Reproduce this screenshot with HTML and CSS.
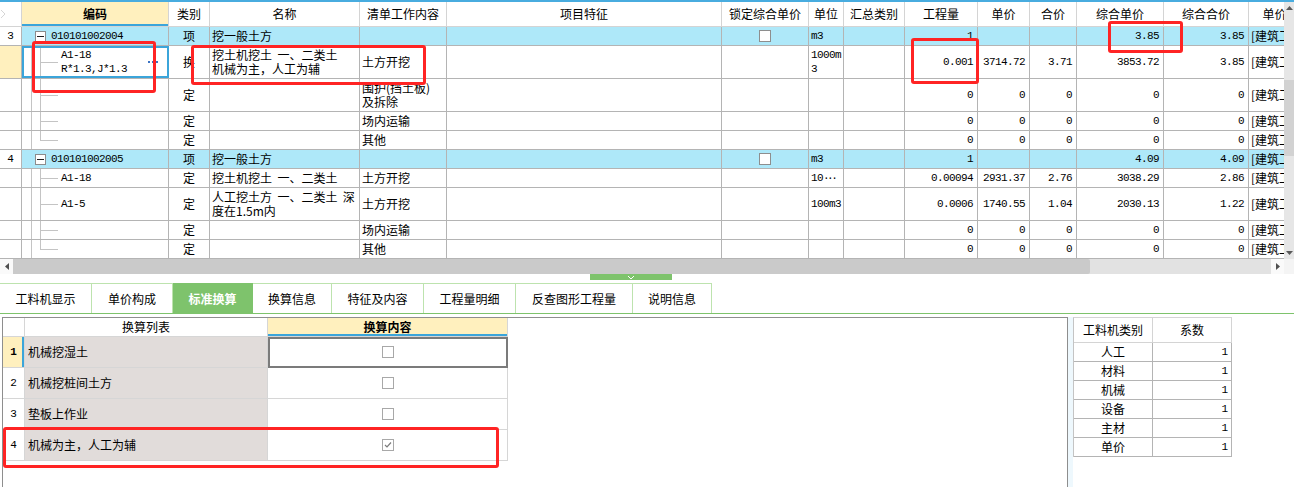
FILE: index.html
```html
<!DOCTYPE html>
<html lang="zh">
<head>
<meta charset="utf-8">
<title>标准换算</title>
<link rel="stylesheet" href="styles.css">
</head>
<body>
<div class="topline"></div>
<div class="gridarea">
  <div class="gridclip">
    <div class="row head">
      <div class="c w0 rnh"><svg width="6" height="10" viewBox="0 0 6 10"><polyline points="1,1 5,5 1,9" fill="none" stroke="#d6d6d6" stroke-width="1"/></svg></div>
      <div class="c w1 hsel">编码</div>
      <div class="c w2">类别</div>
      <div class="c w3">名称</div>
      <div class="c w4">清单工作内容</div>
      <div class="c w5">项目特征</div>
      <div class="c w6">锁定综合单价</div>
      <div class="c w7">单位</div>
      <div class="c w8">汇总类别</div>
      <div class="c w9">工程量</div>
      <div class="c w10">单价</div>
      <div class="c w11">合价</div>
      <div class="c w12">综合单价</div>
      <div class="c w13">综合合价</div>
      <div class="c w14">单价构成</div>
    </div>

    <div class="row h19 blue">
      <div class="c w0 rn">3</div>
      <div class="c w1 code"><span class="tog"></span><span class="m">010101002004</span></div>
      <div class="c w2 ctr">项</div>
      <div class="c w3">挖一般土方</div>
      <div class="c w4"></div>
      <div class="c w5"></div>
      <div class="c w6 ctr"><span class="cb"></span></div>
      <div class="c w7 m">m3</div>
      <div class="c w8"></div>
      <div class="c w9 n">1</div>
      <div class="c w10 n"></div>
      <div class="c w11 n"></div>
      <div class="c w12 n">3.85</div>
      <div class="c w13 n">3.85</div>
      <div class="c w14">[建筑工程]</div>
    </div>

    <div class="row h33">
      <div class="c w0 rn cur"></div>
      <div class="c w1 kid sel"><span class="m">A1-18<br>R*1.3,J*1.3</span><svg class="more" width="10" height="2" viewBox="0 0 10 2"><rect x="0" y="0" width="2" height="2" fill="#3b73c4"/><rect x="4" y="0" width="2" height="2" fill="#3b73c4"/><rect x="8" y="0" width="2" height="2" fill="#3b73c4"/></svg></div>
      <div class="c w2 ctr">换</div>
      <div class="c w3"><span>挖土机挖土  一、二类土<br>机械为主，人工为辅</span></div>
      <div class="c w4">土方开挖</div>
      <div class="c w5"></div>
      <div class="c w6"></div>
      <div class="c w7 m"><span>1000m<br>3</span></div>
      <div class="c w8"></div>
      <div class="c w9 n">0.001</div>
      <div class="c w10 n">3714.72</div>
      <div class="c w11 n">3.71</div>
      <div class="c w12 n">3853.72</div>
      <div class="c w13 n">3.85</div>
      <div class="c w14">[建筑工程]</div>
    </div>

    <div class="row h33">
      <div class="c w0 rn"></div>
      <div class="c w1 kid"></div>
      <div class="c w2 ctr">定</div>
      <div class="c w3"></div>
      <div class="c w4"><span>围护(挡土板)<br>及拆除</span></div>
      <div class="c w5"></div>
      <div class="c w6"></div>
      <div class="c w7"></div>
      <div class="c w8"></div>
      <div class="c w9 n">0</div>
      <div class="c w10 n">0</div>
      <div class="c w11 n">0</div>
      <div class="c w12 n">0</div>
      <div class="c w13 n">0</div>
      <div class="c w14">[建筑工程]</div>
    </div>

    <div class="row h19">
      <div class="c w0 rn"></div>
      <div class="c w1 kid"></div>
      <div class="c w2 ctr">定</div>
      <div class="c w3"></div>
      <div class="c w4">场内运输</div>
      <div class="c w5"></div>
      <div class="c w6"></div>
      <div class="c w7"></div>
      <div class="c w8"></div>
      <div class="c w9 n">0</div>
      <div class="c w10 n">0</div>
      <div class="c w11 n">0</div>
      <div class="c w12 n">0</div>
      <div class="c w13 n">0</div>
      <div class="c w14">[建筑工程]</div>
    </div>

    <div class="row h19">
      <div class="c w0 rn"></div>
      <div class="c w1 kid last"></div>
      <div class="c w2 ctr">定</div>
      <div class="c w3"></div>
      <div class="c w4">其他</div>
      <div class="c w5"></div>
      <div class="c w6"></div>
      <div class="c w7"></div>
      <div class="c w8"></div>
      <div class="c w9 n">0</div>
      <div class="c w10 n">0</div>
      <div class="c w11 n">0</div>
      <div class="c w12 n">0</div>
      <div class="c w13 n">0</div>
      <div class="c w14">[建筑工程]</div>
    </div>

    <div class="row h19 blue">
      <div class="c w0 rn">4</div>
      <div class="c w1 code"><span class="tog"></span><span class="m">010101002005</span></div>
      <div class="c w2 ctr">项</div>
      <div class="c w3">挖一般土方</div>
      <div class="c w4"></div>
      <div class="c w5"></div>
      <div class="c w6 ctr"><span class="cb"></span></div>
      <div class="c w7 m">m3</div>
      <div class="c w8"></div>
      <div class="c w9 n">1</div>
      <div class="c w10 n"></div>
      <div class="c w11 n"></div>
      <div class="c w12 n">4.09</div>
      <div class="c w13 n">4.09</div>
      <div class="c w14">[建筑工程]</div>
    </div>

    <div class="row h19">
      <div class="c w0 rn"></div>
      <div class="c w1 kid"><span class="m">A1-18</span></div>
      <div class="c w2 ctr">定</div>
      <div class="c w3">挖土机挖土  一、二类土</div>
      <div class="c w4">土方开挖</div>
      <div class="c w5"></div>
      <div class="c w6"></div>
      <div class="c w7 m">10<span class="dots">···</span></div>
      <div class="c w8"></div>
      <div class="c w9 n">0.00094</div>
      <div class="c w10 n">2931.37</div>
      <div class="c w11 n">2.76</div>
      <div class="c w12 n">3038.29</div>
      <div class="c w13 n">2.86</div>
      <div class="c w14">[建筑工程]</div>
    </div>

    <div class="row h33">
      <div class="c w0 rn"></div>
      <div class="c w1 kid"><span class="m">A1-5</span></div>
      <div class="c w2 ctr">定</div>
      <div class="c w3"><span>人工挖土方  一、二类土  深<br>度在1.5m内</span></div>
      <div class="c w4">土方开挖</div>
      <div class="c w5"></div>
      <div class="c w6"></div>
      <div class="c w7 m">100m3</div>
      <div class="c w8"></div>
      <div class="c w9 n">0.0006</div>
      <div class="c w10 n">1740.55</div>
      <div class="c w11 n">1.04</div>
      <div class="c w12 n">2030.13</div>
      <div class="c w13 n">1.22</div>
      <div class="c w14">[建筑工程]</div>
    </div>

    <div class="row h19">
      <div class="c w0 rn"></div>
      <div class="c w1 kid"></div>
      <div class="c w2 ctr">定</div>
      <div class="c w3"></div>
      <div class="c w4">场内运输</div>
      <div class="c w5"></div>
      <div class="c w6"></div>
      <div class="c w7"></div>
      <div class="c w8"></div>
      <div class="c w9 n">0</div>
      <div class="c w10 n">0</div>
      <div class="c w11 n">0</div>
      <div class="c w12 n">0</div>
      <div class="c w13 n">0</div>
      <div class="c w14">[建筑工程]</div>
    </div>

    <div class="row h19">
      <div class="c w0 rn"></div>
      <div class="c w1 kid last"></div>
      <div class="c w2 ctr">定</div>
      <div class="c w3"></div>
      <div class="c w4">其他</div>
      <div class="c w5"></div>
      <div class="c w6"></div>
      <div class="c w7"></div>
      <div class="c w8"></div>
      <div class="c w9 n">0</div>
      <div class="c w10 n">0</div>
      <div class="c w11 n">0</div>
      <div class="c w12 n">0</div>
      <div class="c w13 n">0</div>
      <div class="c w14">[建筑工程]</div>
    </div>
  </div>
  <div class="vscroll">
    <div class="varr"><svg width="7" height="4" viewBox="0 0 7 4"><polygon points="0,4 3.5,0 7,4" fill="#5a5a5a"/></svg></div>
    <div class="vtrack"><div class="vthumb"></div></div>
    <div class="varr"><svg width="7" height="4" viewBox="0 0 7 4"><polygon points="0,0 3.5,4 7,0" fill="#5a5a5a"/></svg></div>
  </div>
</div>
<div class="hscroll">
  <div class="harr"><svg width="4" height="7" viewBox="0 0 4 7"><polygon points="4,0 0,3.5 4,7" fill="#505050"/></svg></div>
  <div class="hthumb"></div>
  <div class="htrack"></div>
  <div class="harr"><svg width="4" height="7" viewBox="0 0 4 7"><polygon points="0,0 4,3.5 0,7" fill="#505050"/></svg></div>
  <div class="corner"></div>
</div>
<div class="splitter">
  <div class="handle"><svg width="8" height="5" viewBox="0 0 8 5"><polyline points="1,1 4,4 7,1" fill="none" stroke="#ffffff" stroke-width="1"/></svg></div>
</div>
<div class="tabs">
  <div class="tab t1">工料机显示</div>
  <div class="tab t2">单价构成</div>
  <div class="tab t3 active">标准换算</div>
  <div class="tab t4">换算信息</div>
  <div class="tab t5">特征及内容</div>
  <div class="tab t6">工程量明细</div>
  <div class="tab t7">反查图形工程量</div>
  <div class="tab t8">说明信息</div>
</div>
<div class="bottom">
  <div class="panel">
    <div class="xrow xhead">
      <div class="x xrn"></div>
      <div class="x xlist ctr">换算列表</div>
      <div class="x xcon ctr">换算内容</div>
    </div>
    <div class="xrow">
      <div class="x xrn cur">1</div>
      <div class="x xlist">机械挖湿土</div>
      <div class="x xcon ctr sel"><span class="cb2"></span></div>
    </div>
    <div class="xrow">
      <div class="x xrn">2</div>
      <div class="x xlist">机械挖桩间土方</div>
      <div class="x xcon ctr"><span class="cb2"></span></div>
    </div>
    <div class="xrow">
      <div class="x xrn">3</div>
      <div class="x xlist">垫板上作业</div>
      <div class="x xcon ctr"><span class="cb2"></span></div>
    </div>
    <div class="xrow">
      <div class="x xrn">4</div>
      <div class="x xlist">机械为主，人工为辅</div>
      <div class="x xcon ctr"><span class="cb2"><svg width="10" height="10" viewBox="0 0 10 10"><polyline points="2,5 4,7 8,2.5" fill="none" stroke="#7c7c7c" stroke-width="1.2"/></svg></span></div>
    </div>
  </div>
  <div class="strip"></div>
  <div class="coef">
    <div class="krow khead"><div class="k ctr">工料机类别</div><div class="k ctr">系数</div></div>
    <div class="krow"><div class="k ctr">人工</div><div class="k kn">1</div></div>
    <div class="krow"><div class="k ctr">材料</div><div class="k kn">1</div></div>
    <div class="krow"><div class="k ctr">机械</div><div class="k kn">1</div></div>
    <div class="krow"><div class="k ctr">设备</div><div class="k kn">1</div></div>
    <div class="krow"><div class="k ctr">主材</div><div class="k kn">1</div></div>
    <div class="krow"><div class="k ctr">单价</div><div class="k kn">1</div></div>
  </div>
</div>

<div class="mark mk1"></div>
<div class="mark mk2"></div>
<div class="mark mk3"></div>
<div class="mark mk4"></div>
<div class="mark mk5"></div>
</body>
</html>
```

FILE: styles.css
```css
* { box-sizing: border-box; }
html, body { margin: 0; padding: 0; }
body {
  width: 1294px;
  height: 487px;
  overflow: hidden;
  position: relative;
  background: #ffffff;
  color: #000000;
  font-family: "Noto Sans CJK SC", "Liberation Sans", sans-serif;
  font-size: 12px;
  line-height: 14px;
}

.topline { height: 2px; background: #48acdf; }

/* ---------- main grid ---------- */
.gridarea { display: flex; height: 257px; }
.gridclip { flex: 1; overflow: hidden; }

.row {
  display: flex;
  width: 1325px;
  border-bottom: 1px solid #b4b4b4;
}
.h19 { height: 19px; }
.h33 { height: 33px; }

.c {
  flex: none;
  display: flex;
  align-items: center;
  border-right: 1px solid #b4b4b4;
  padding: 0 2px;
  overflow: hidden;
  white-space: pre;
}
.w0 { width: 22px; }
.w1 { width: 147px; }
.w2 { width: 41px; }
.w3 { width: 150px; }
.w4 { width: 87px; }
.w5 { width: 275px; }
.w6 { width: 87px; }
.w7 { width: 35px; }
.w8 { width: 61px; }
.w9 { width: 73px; }
.w10 { width: 52px; }
.w11 { width: 47px; }
.w12 { width: 87px; }
.w13 { width: 85px; }
.w14 { width: 76px; }

.head { height: 25px; border-bottom-color: #d4d4d4; }
.head .c { justify-content: center; border-right-color: #d4d4d4; }
.head .rnh { justify-content: flex-start; padding: 0; }
.head .hsel {
  background: #fff0be;
  font-weight: bold;
  box-shadow: inset 0 -2px 0 #3ba5da;
}

.ctr { justify-content: center; }
.n {
  justify-content: flex-end;
  padding-right: 4px;
  font-family: "Liberation Mono", monospace;
  font-size: 11px;
  letter-spacing: -0.6px;
}
.m {
  font-family: "Liberation Mono", monospace;
  font-size: 11px;
  letter-spacing: -0.6px;
}
.dots { letter-spacing: -2.5px; }

.rn {
  justify-content: center;
  font-family: "Liberation Mono", monospace;
  font-size: 11px;
}
.rn.cur { background: #fff0be; }

.blue .c { background: #aee8f9; }
.blue .c.rn { background: #ffffff; }

.code { padding-left: 13px; }
.tog {
  width: 11px;
  height: 11px;
  flex: none;
  border: 1px solid #8c8c8c;
  background: #ffffff linear-gradient(#202020, #202020) center / 7px 1px no-repeat;
  margin-right: 5px;
}

.kid {
  padding-left: 39px;
  background:
    linear-gradient(#c4c4c4, #c4c4c4) 9px 0 / 1px 100% no-repeat,
    linear-gradient(#c4c4c4, #c4c4c4) 18px 0 / 1px 100% no-repeat,
    linear-gradient(#c4c4c4, #c4c4c4) 18px 50% / 18px 1px no-repeat;
}
.kid.last {
  background:
    linear-gradient(#c4c4c4, #c4c4c4) 9px 0 / 1px 100% no-repeat,
    linear-gradient(#c4c4c4, #c4c4c4) 18px 0 / 1px 50% no-repeat,
    linear-gradient(#c4c4c4, #c4c4c4) 18px 50% / 18px 1px no-repeat;
}
.kid.sel {
  outline: 2px solid #3ba5da;
  outline-offset: -2px;
}
.more { margin-left: auto; margin-right: 8px; flex: none; }

.cb {
  width: 12px;
  height: 12px;
  border: 1px solid #8e8e8e;
  background: #ffffff;
}

/* ---------- scrollbars ---------- */
.vscroll {
  width: 10px;
  flex: none;
  display: flex;
  flex-direction: column;
  background: #e6e6e6;
}
.varr { height: 12px; display: flex; align-items: center; justify-content: center; }
.vtrack { flex: 1; padding-top: 66px; }
.vthumb { height: 76px; background: #d2d2d2; }

.hscroll { display: flex; height: 15px; background: #e2e2e2; }
.harr {
  width: 13px;
  flex: none;
  display: flex;
  align-items: center;
  justify-content: center;
  background: #fafafa;
}
.hthumb { width: 1077px; flex: none; background: #cacaca; border-radius: 0 2px 2px 0; }
.htrack { flex: 1; }
.corner { width: 10px; flex: none; background: #f4f4f4; }

/* ---------- splitter + tabs ---------- */
.splitter { height: 9px; }
.handle {
  margin-left: 590px;
  width: 82px;
  height: 6px;
  background: #7ec36c;
  display: flex;
  justify-content: center;
  align-items: center;
}

.tabs {
  display: flex;
  height: 31px;
  border-bottom: 1px solid #7ec36c;
}
.tab {
  flex: none;
  height: 30px;
  display: flex;
  align-items: center;
  justify-content: center;
  border-top: 1px solid #bde3ae;
  border-right: 1px solid #bde3ae;
  font-size: 12px;
}
.t1 { width: 92px; }
.t2 { width: 81px; }
.t3 { width: 80px; }
.t4 { width: 79px; }
.t5 { width: 92px; }
.t6 { width: 92px; }
.t7 { width: 117px; }
.t8 { width: 79px; }
.tab.active { background: #7ec36c; color: #ffffff; font-weight: bold; border-color: #7ec36c; }

/* ---------- bottom area ---------- */
.bottom { display: flex; height: 170px; margin-top: 3px; }
.panel {
  margin-left: 2px;
  width: 1066px;
  flex: none;
  border: 1px solid #8e8e8e;
  border-bottom: none;
}
.strip { width: 5px; flex: none; background: #eef8fd; }

.xrow { display: flex; height: 31px; }
.xhead { height: 19px; }
.x {
  flex: none;
  display: flex;
  align-items: center;
  border-right: 1px solid #d6d6d6;
  border-bottom: 1px solid #d6d6d6;
  padding: 0 3px;
  white-space: nowrap;
}
.xrn { width: 22px; justify-content: center; font-family: "Liberation Mono", monospace; font-size: 11px; }
.xlist { width: 243px; background: #e1dcda; }
.xcon { width: 240px; }
.xhead .xlist { background: #ffffff; }
.xhead .xcon { background: #fff0be; font-weight: bold; box-shadow: inset 0 -2px 0 #3ba5da; }
.xrn.cur { background: #fff0be; font-weight: bold; box-shadow: inset -2px 0 0 #3ba5da; }
.xcon.sel { outline: 2px solid #7b7b7b; outline-offset: -2px; }
.cb2 {
  width: 12px;
  height: 12px;
  border: 1px solid #a8a8a8;
  background: #ffffff;
  display: flex;
  align-items: center;
  justify-content: center;
}

.coef {
  width: 159px;
  flex: none;
  align-self: flex-start;
  border-top: 1px solid #d4d4d4;
  border-left: 1px solid #c4c4c4;
}
.krow { display: flex; height: 19px; }
.krow.khead { height: 25px; }
.k {
  width: 79px;
  flex: none;
  display: flex;
  align-items: center;
  border-right: 1px solid #b4b4b4;
  border-bottom: 1px solid #b4b4b4;
  padding: 0 3px;
}
.khead .k { border-color: #d4d4d4; }
.kn { justify-content: flex-end; font-family: "Liberation Mono", monospace; font-size: 11px; }

/* ---------- red annotation boxes ---------- */
.mark {
  position: absolute;
  border: 3px solid #ff2424;
  border-radius: 3px;
}
.mk1 { left: 32px; top: 41px; width: 124px; height: 52px; }
.mk2 { left: 191px; top: 45px; width: 235px; height: 40px; }
.mk3 { left: 911px; top: 38px; width: 68px; height: 46px; }
.mk4 { left: 1108px; top: 21px; width: 75px; height: 32px; }
.mk5 { left: 3px; top: 427px; width: 496px; height: 41px; }
```
